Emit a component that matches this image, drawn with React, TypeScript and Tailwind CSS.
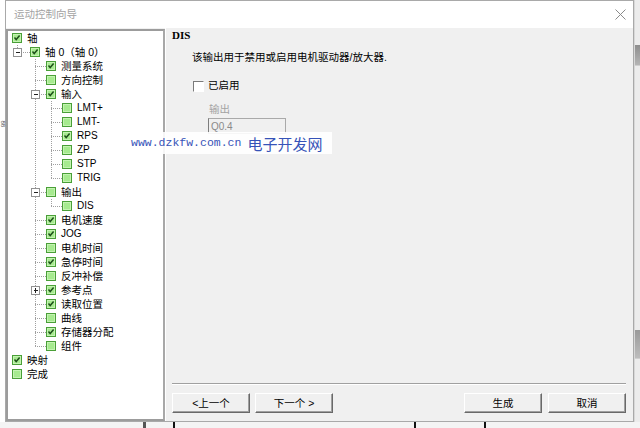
import React from 'react'

type Node = {
  label: string;
  level: number;
  checked: boolean;
  exp?: '-' | '+';
  last?: boolean;
  pass?: number[];
  latin?: boolean;
}

// checkbox left edge per level, and x of the dotted line that joins a level's children
const cbLeft = [4, 22, 38, 54]
const lineX = [9, 27, 43]

const nodes: Node[] = [
  { label: '轴', level: 0, checked: true },
  { label: '轴 0（轴 0）', level: 1, checked: true, exp: '-', last: true },
  { label: '测量系统', level: 2, checked: true },
  { label: '方向控制', level: 2, checked: false },
  { label: '输入', level: 2, checked: true, exp: '-' },
  { label: 'LMT+', level: 3, checked: false, pass: [27], latin: true },
  { label: 'LMT-', level: 3, checked: false, pass: [27], latin: true },
  { label: 'RPS', level: 3, checked: true, pass: [27], latin: true },
  { label: 'ZP', level: 3, checked: false, pass: [27], latin: true },
  { label: 'STP', level: 3, checked: false, pass: [27], latin: true },
  { label: 'TRIG', level: 3, checked: false, pass: [27], last: true, latin: true },
  { label: '输出', level: 2, checked: false, exp: '-' },
  { label: 'DIS', level: 3, checked: false, pass: [27], last: true, latin: true },
  { label: '电机速度', level: 2, checked: true },
  { label: 'JOG', level: 2, checked: true, latin: true },
  { label: '电机时间', level: 2, checked: false },
  { label: '急停时间', level: 2, checked: true },
  { label: '反冲补偿', level: 2, checked: false },
  { label: '参考点', level: 2, checked: true, exp: '+' },
  { label: '读取位置', level: 2, checked: true },
  { label: '曲线', level: 2, checked: false },
  { label: '存储器分配', level: 2, checked: true },
  { label: '组件', level: 2, checked: false, last: true },
  { label: '映射', level: 0, checked: true },
  { label: '完成', level: 0, checked: false },
]

function GreenBox({ checked }: { checked: boolean }) {
  return (
    <svg width="10" height="10" className="shrink-0" shapeRendering="crispEdges">
      <rect x="0.5" y="0.5" width="9" height="9" fill="#8ddb72" stroke="#4a9f38" />
      <rect x="1.5" y="1.5" width="7" height="7" fill="#a6ea8f" stroke="#c4f3b2" />
      {checked && (
        <path d="M2.5 4.5 L4.2 6.6 L7.6 2.6" fill="none" stroke="#1d4f1a" strokeWidth="1.5" shapeRendering="auto" />
      )}
    </svg>
  )
}

function Guides({ n }: { n: Node }) {
  const w = cbLeft[n.level]
  const px = n.level > 0 ? lineX[n.level - 1] : 0
  return (
    <svg width={w} height="14" className="shrink-0" shapeRendering="crispEdges">
      {(n.pass || []).map((x) => (
        <line key={x} x1={x + 0.5} y1="0" x2={x + 0.5} y2="14" stroke="#a0a0a0" strokeDasharray="1 1" />
      ))}
      {n.level > 0 && (
        <>
          <line x1={px + 0.5} y1="0" x2={px + 0.5} y2={n.last ? 7 : 14} stroke="#a0a0a0" strokeDasharray="1 1" />
          <line x1={px} y1="7.5" x2={w} y2="7.5" stroke="#a0a0a0" strokeDasharray="1 1" />
        </>
      )}
      {n.exp && (
        <>
          <rect x={px - 3.5} y="3.5" width="8" height="8" fill="#fff" stroke="#919191" />
          <line x1={px - 1} y1="7.5" x2={px + 3} y2="7.5" stroke="#222" />
          {n.exp === '+' && <line x1={px + 0.5} y1="5" x2={px + 0.5} y2="10" stroke="#222" />}
        </>
      )}
    </svg>
  )
}

function Btn({ children, className = '' }: { children: React.ReactNode; className?: string }) {
  return (
    <button className={`w-[78px] h-[20px] bg-[#f0f0f0] border border-t-white border-l-white border-b-[#696969] border-r-[#696969] shadow-[inset_-1px_-1px_0_#a0a0a0] text-[10.5px] text-black leading-none ${className}`}>
      {children}
    </button>
  )
}

export default function App() {
  return (
    <div className="relative w-[640px] h-[428px] overflow-hidden bg-white flex flex-col font-[family-name:'Liberation_Sans','Noto_Sans_CJK_SC',sans-serif]">
      <div className="flex h-[422px]">
        {/* desktop strip on the left */}
        <div className="w-[5px] bg-white pt-[120px]">
          <div className="text-[6px] leading-none text-[#444] rotate-90">88</div>
        </div>

        {/* dialog */}
        <div className="w-[629px] flex flex-col border border-[#a9a9a9]">
          <div className="h-[27px] bg-white flex items-center justify-between pl-[8px] pr-[7px]">
            <span className="text-[10.5px] text-[#a3a3a3]">运动控制向导</span>
            <svg width="11" height="11" viewBox="0 0 11 11">
              <path d="M0.5 0.5 L10.5 10.5 M10.5 0.5 L0.5 10.5" stroke="#8a8a8a" strokeWidth="1" />
            </svg>
          </div>

          <div className="flex-1 flex bg-[#f0f0f0]">
            {/* tree */}
            <div className="mt-[1px] w-[159px] bg-white border-2 border-[#9c9c9c] border-r-[#a8a8a8]">
              {nodes.map((n) => (
                <div key={n.label} className="flex items-center h-[14px]">
                  <Guides n={n} />
                  <GreenBox checked={n.checked} />
                  <span className={`ml-[5px] whitespace-nowrap text-black ${n.latin ? 'text-[10px]' : 'text-[10.5px]'} leading-none`}>
                    {n.label}
                  </span>
                </div>
              ))}
            </div>
            <div className="w-[1px] bg-white" />

            {/* page */}
            <div className="flex-1 flex flex-col pl-[6px] pr-[7px] pb-[8px]">
              <div className="h-[14px] leading-[14px] text-[11px] font-bold text-black font-[family-name:'Liberation_Serif',serif]">DIS</div>
              <div className="mt-[7px] ml-[20px] h-[16px] leading-[16px] text-[10.5px] text-black">
                该输出用于禁用或启用电机驱动器/放大器.
              </div>
              <div className="mt-[13px] ml-[21px] h-[16px] flex items-center">
                <span className="w-[11px] h-[11px] bg-white border border-t-[#7a7a7a] border-l-[#7a7a7a] border-b-white border-r-white" />
                <span className="ml-[4px] text-[10.5px] text-black">已启用</span>
              </div>
              <div className="mt-[8px] ml-[37px] h-[14px] leading-[14px] text-[10.5px] text-[#a3a3a3]">输出</div>
              <div className="mt-[2px] ml-[36px] w-[78px] h-[16px] border border-[#a9a9a9] border-l-[#7d7d7d] bg-[#f0f0f0] flex items-center pl-[2px] text-[10px] text-[#8a8a8a]">
                Q0.4
              </div>

              <div className="flex-1" />
              <div className="h-[2px] border-t border-[#a0a0a0] border-b border-b-white" />
              <div className="mt-[8px] flex">
                <Btn>&lt;上一个</Btn>
                <Btn className="ml-[5px]">下一个 &gt;</Btn>
                <div className="flex-1" />
                <Btn>生成</Btn>
                <Btn className="ml-[6px]">取消</Btn>
              </div>
            </div>
          </div>
        </div>

        {/* desktop strip on the right */}
        <div className="flex-1 flex flex-col bg-[#ececec] border-l border-[#d8d8d8]">
          <div className="h-[45px]" />
          <div className="h-[20px] bg-gradient-to-b from-[#8e8e8e] to-[#b5b5b5]" />
          <div className="h-[265px] border-t border-[#cfcfcf]" />
          <div className="h-[28px] bg-gradient-to-b from-[#9a9a9a] to-[#bdbdbd]" />
          <div className="flex-1 border-t border-[#cfcfcf]" />
        </div>
      </div>

      {/* desktop strip below */}
      <div className="flex-1 flex bg-[#f4f4f4]">
        <div className="w-[143px]" />
        <div className="w-[3px] bg-[#555]" />
        <div className="w-[27px]" />
        <div className="w-[2px] bg-[#111]" />
        <div className="w-[239px]" />
        <div className="w-[2px] bg-[#111]" />
        <div className="w-[68px]" />
        <div className="w-[2px] bg-[#111]" />
      </div>

      {/* watermark */}
      <div className="absolute left-[125px] top-[132px] w-[207px] h-[22px] bg-white/90 flex items-center pl-[6px] text-[#3653b8]">
        <span className="text-[11.5px] font-[family-name:'Liberation_Mono',monospace]">www.dzkfw.com.cn</span>
        <span className="ml-[6px] text-[15px] leading-none font-[family-name:'Noto_Sans_CJK_SC',sans-serif]">电子开发网</span>
      </div>
    </div>
  )
}
